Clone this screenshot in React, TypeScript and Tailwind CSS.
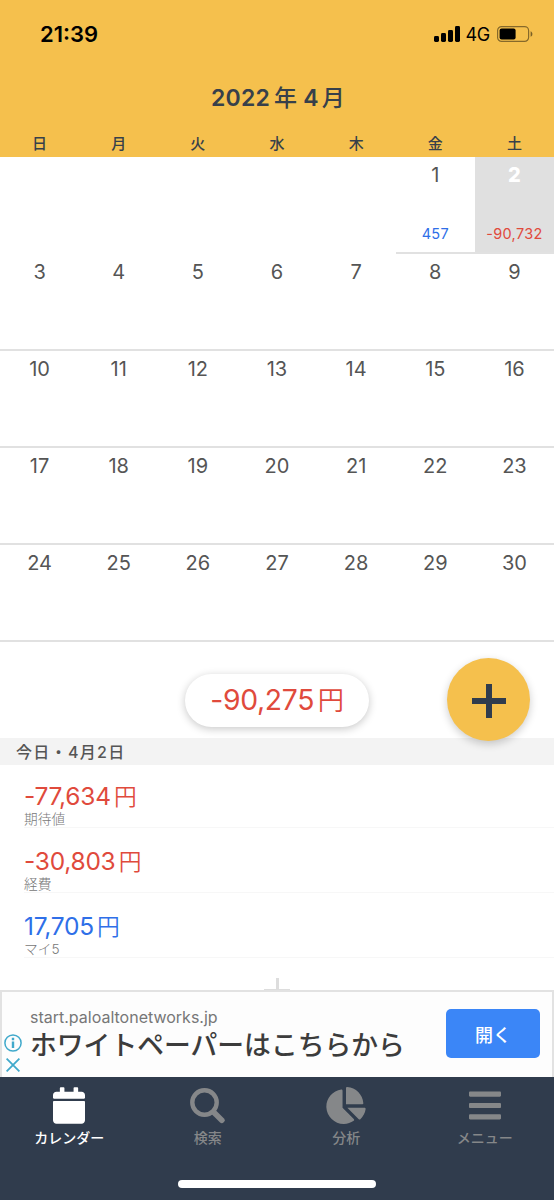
import type { ReactNode } from "react";
import { FaBars, FaCalendar, FaChartPie } from "react-icons/fa";

const WEEKDAYS = ["日", "月", "火", "水", "木", "金", "土"];

// Only days that have a total are listed here.
const TOTALS: Record<number, number> = { 1: 457, 2: -90732 };
const TODAY = 2;

const FIRST_WEEKDAY = 5;
const WEEKS = Array.from({ length: 5 }, (_, w) =>
  Array.from({ length: 7 }, (_, d) => w * 7 + d - FIRST_WEEKDAY + 1),
);

const ENTRIES = [
  { amount: -77634, label: "期待値" },
  { amount: -30803, label: "経費" },
  { amount: 17705, label: "マイ5" },
];

const amountColor = (n: number) => (n < 0 ? "text-[#e04a3c]" : "text-[#2f6fe8]");

export default function App() {
  return (
    <div className="flex h-[1200px] w-[554px] flex-col overflow-hidden bg-white font-['Inter','Noto_Sans_CJK_JP',sans-serif] text-[#555]">
      <header className="flex h-[157px] shrink-0 flex-col bg-[#f5c04d] text-[#37404a]">
        <StatusBar />
        <h1 className="mt-[14px] pl-0.5 text-center text-[23px] leading-8 font-semibold tracking-[0.2px]">
          2022<span className="ml-1 font-medium">年</span> 4<span className="ml-[3px] font-medium">月</span>
        </h1>
        <div className="mt-auto grid grid-cols-7 pb-[3px] text-center text-[15px] leading-5 font-medium">
          {WEEKDAYS.map((d) => (
            <span key={d}>{d}</span>
          ))}
        </div>
      </header>

      <main className="flex min-h-0 flex-1 flex-col">
        {WEEKS.map((week) => (
          <div key={week[6]} className="grid h-[97px] shrink-0 grid-cols-7">
            {week.map((day) => (
              <DayCell key={day} day={day} />
            ))}
          </div>
        ))}

        <div className="relative flex h-[96px] shrink-0 items-center justify-center pt-5">
          <div className="flex h-[53px] w-[184px] items-center justify-center rounded-full bg-white text-[28.3px] tracking-[-0.3px] text-[#e04a3c] shadow-[0_2px_8px_rgba(0,0,0,0.22)]">
            <Yen amount={-90275} />
          </div>
          <button className="absolute top-4 right-6 z-10 flex size-[83px] items-center justify-center rounded-full bg-[#f5c04d] pt-0.5 shadow-[0_3px_8px_rgba(0,0,0,0.2)]">
            <svg viewBox="0 0 34 34" className="size-[34px] fill-[#303c4d]" aria-hidden>
              <path d="M14 0h6v14h14v6H20v14h-6V20H0v-6h14z" />
            </svg>
          </button>
        </div>

        <h2 className="flex h-[27px] shrink-0 items-center bg-[#f3f3f3] pl-4 text-[16px] font-medium tracking-[1.3px]">
          今日・4月2日
        </h2>
        <ul className="shrink-0 pl-6">
          {ENTRIES.map((e) => (
            <li
              key={e.label}
              className="flex h-[65px] flex-col justify-end border-b border-[#f7f7f7] first:h-[63px]"
            >
              <span className={`text-[24.5px] leading-7 tracking-[-0.25px] ${amountColor(e.amount)}`}>
                <Yen amount={e.amount} />
              </span>
              <span className="-mt-[1px] text-[13.7px] leading-[17px] font-light text-[#777]">
                <span className="relative top-px">{e.label}</span>
              </span>
            </li>
          ))}
        </ul>

        <div className="mt-auto flex flex-col items-center">
          <div className="h-[11px] w-[3px] bg-[#ddd]" />
          <div className="h-[1px] w-[26px] bg-[#ddd]" />
        </div>
      </main>

      <AdBanner />

      <nav className="flex h-[123px] shrink-0 flex-col bg-[#303c4d]">
        <div className="grid grid-cols-4 pt-[10px]">
          <Tab label="カレンダー" active>
            <FaCalendar className="h-[37px] w-8" />
          </Tab>
          <Tab label="検索">
            <SearchIcon />
          </Tab>
          <Tab label="分析">
            <FaChartPie className="h-[37px] w-10" />
          </Tab>
          <Tab label="メニュー">
            <FaBars className="h-[37px] w-8" />
          </Tab>
        </div>
        <div className="mx-auto mt-auto mb-[12px] h-[8px] w-[198px] rounded-full bg-white" />
      </nav>
    </div>
  );
}

function StatusBar() {
  return (
    <div className="flex h-[68px] items-center pr-[21px] pl-10 text-black">
      <span className="text-[22px] font-semibold">21:39</span>
      <svg viewBox="0 0 26 16" className="ml-auto h-4 w-[26px]" aria-hidden>
        <rect x="0" y="10" width="5" height="6" rx="1.4" />
        <rect x="7" y="7" width="5" height="9" rx="1.4" />
        <rect x="14" y="4" width="5" height="12" rx="1.4" />
        <rect x="21" y="0" width="5" height="16" rx="1.4" />
      </svg>
      <span className="ml-[6px] text-[18px] tracking-[-0.3px]">4G</span>
      <svg viewBox="0 0 36 16" className="ml-[7px] h-4 w-9" fill="none" aria-hidden>
        <rect x="0.6" y="0.6" width="31" height="14.8" rx="4" stroke="#000" strokeOpacity="0.45" strokeWidth="1.2" />
        <rect x="2.6" y="2.6" width="16" height="10.8" rx="2" fill="#000" />
        <path d="M33.6 5.2c2.4 1 2.4 4.6 0 5.6z" fill="#000" fillOpacity="0.5" />
      </svg>
    </div>
  );
}

function DayCell({ day }: { day: number }) {
  if (day < 1) return <div />;

  const total = TOTALS[day];
  const isToday = day === TODAY;

  return (
    <div
      className={`flex flex-col items-center justify-between border-b-2 border-[#e1e1e1] pt-1 pb-2 ${
        isToday ? "bg-[#e0e0e0]" : ""
      }`}
    >
      <span className={`text-[20px] leading-7 ${isToday ? "font-extrabold text-white" : ""}`}>{day}</span>
      {total !== undefined && (
        <span className={`text-[14.5px] leading-5 tracking-[0.3px] ${amountColor(total)}`}>
          {total.toLocaleString("en-US")}
        </span>
      )}
    </div>
  );
}

function Yen({ amount }: { amount: number }) {
  return (
    <span>
      {amount.toLocaleString("en-US")}
      <span className="ml-[0.14em] text-[0.93em] font-[350]">円</span>
    </span>
  );
}

function AdBanner() {
  return (
    <aside className="flex h-[87px] shrink-0 border-2 border-b-0 border-[#e2e2e2] bg-[#fdfdfd]">
      <div className="flex w-[22px] shrink-0 flex-col items-center justify-end gap-[6px] pb-[5px]">
        <svg viewBox="0 0 18 18" className="size-[18px]" fill="none" stroke="#40a9cb" aria-hidden>
          <circle cx="9" cy="9" r="8.1" strokeWidth="1.5" />
          <path d="M9 3.8v2.4M9 7.5v6.5" strokeWidth="2.4" />
        </svg>
        <svg viewBox="0 0 14 14" className="size-[14px]" fill="none" stroke="#40a9cb" strokeWidth="1.8" aria-hidden>
          <path d="M.6.6l12.8 12.8M13.4.6L.6 13.4" />
        </svg>
      </div>
      <div className="flex flex-col pt-[13px] pl-[6px] whitespace-nowrap">
        <span className="text-[16px] leading-6 text-[#777]">start.paloaltonetworks.jp</span>
        <span className="text-[26.8px] leading-8 font-medium text-[#3c3c3c]">ホワイトペーパーはこちらから</span>
      </div>
      <button className="mt-[17px] mr-[12px] ml-auto flex h-[49px] w-[94px] items-center justify-center rounded-[5px] bg-[#3b86f7] pt-1 text-[18px] font-medium text-white">
        開く
      </button>
    </aside>
  );
}

function SearchIcon() {
  return (
    <svg viewBox="0 0 35 36" className="h-9 w-[35px]" fill="none" stroke="currentColor" aria-hidden>
      <circle cx="14.5" cy="14.5" r="12.2" strokeWidth="4.4" />
      <path d="M23.5 24l8.3 8.3" strokeWidth="5.6" strokeLinecap="round" />
    </svg>
  );
}

function Tab({ label, active = false, children }: { label: string; active?: boolean; children: ReactNode }) {
  return (
    <div className={`flex flex-col items-center ${active ? "text-white" : "text-[#858789]"}`}>
      <div className="flex h-[37px] items-center">{children}</div>
      <span className="mt-[4px] text-[14px] leading-5 font-medium">{label}</span>
    </div>
  );
}
